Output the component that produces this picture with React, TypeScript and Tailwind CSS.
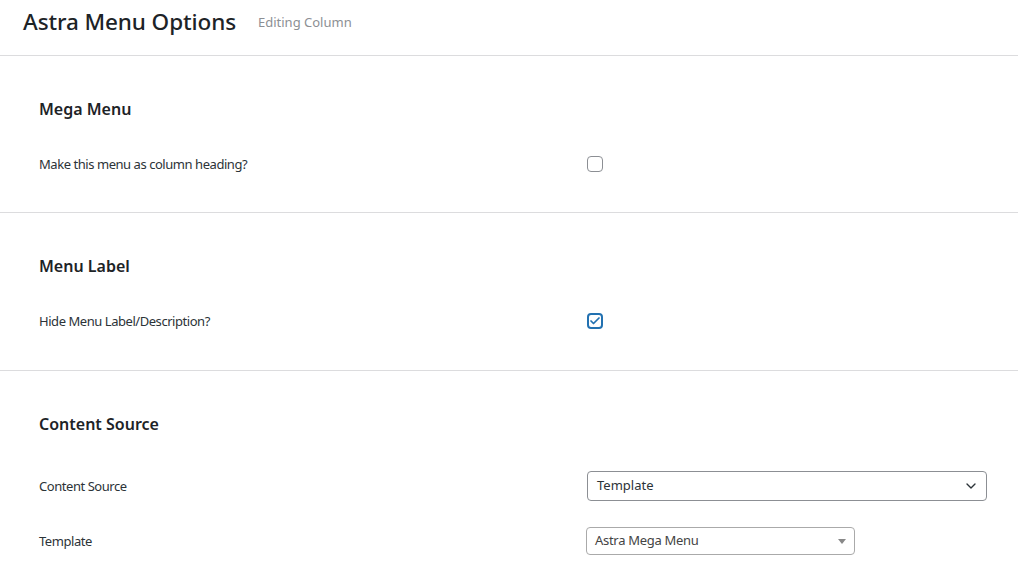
import { Check, ChevronDown } from 'lucide-react'

function Checkbox({ checked }: { checked?: boolean }) {
  return checked ? (
    <span className="h-4 w-4 rounded-[4px] border-2 border-[#2271b1] flex items-center justify-center">
      <Check size={12} strokeWidth={3.5} className="text-[#2271b1]" />
    </span>
  ) : (
    <span className="h-4 w-4 rounded-[4px] border border-[#8c8f94] bg-white" />
  )
}

function Row({ label, children, className = '' }: { label: string; children: React.ReactNode; className?: string }) {
  return (
    <div className={`grid grid-cols-[548px_1fr] items-center ${className}`}>
      <span className="text-[13px] tracking-[-0.45px] text-[#2c3338] pt-[2px]">{label}</span>
      <div className="flex items-center">{children}</div>
    </div>
  )
}

function Section({ title, children, bottom }: { title: string; children: React.ReactNode; bottom: string }) {
  return (
    <section className={`px-[39px] pt-[41px] ${bottom}`}>
      <h2 className="h-6 flex items-center text-[16px] font-semibold text-[#1d2327]">{title}</h2>
      {children}
    </section>
  )
}

export default function App() {
  return (
    <div className="w-[1018px] h-[586px] overflow-hidden bg-white" style={{ fontFamily: '"Noto Sans", "Open Sans", sans-serif' }}>
      <header className="h-14 flex items-center px-[23px] pb-[12px] border-b border-[#dcdcde]">
        <h1 className="text-[22.5px] font-medium text-[#1d2327] tracking-[-0.1px]">Astra Menu Options</h1>
        <span className="ml-[22px] text-[13px] text-[#8c8f94] mt-[3px]">Editing Column</span>
      </header>

      <Section title="Mega Menu" bottom="pb-8 border-b border-[#dcdcde]">
        <Row label="Make this menu as column heading?" className="h-8 mt-[27px]">
          <Checkbox />
        </Row>
      </Section>

      <Section title="Menu Label" bottom="pb-[33px] border-b border-[#dcdcde]">
        <Row label="Hide Menu Label/Description?" className="h-8 mt-[27px]">
          <Checkbox checked />
        </Row>
      </Section>

      <Section title="Content Source" bottom="pb-8">
        <Row label="Content Source" className="h-[30px] mt-[35px]">
          <div className="w-[400px] h-[30px] rounded-[4px] border border-[#8c8f94] flex items-center justify-between pl-[9px] pr-[7px] text-[13px] text-[#2c3338]">
            <span>Template</span>
            <ChevronDown size={16} strokeWidth={2} className="text-[#2c3338]" />
          </div>
        </Row>
        <Row label="Template" className="h-[28px] mt-[26px]">
          <div className="-ml-px w-[269px] h-[28px] rounded-[4px] border border-[#aaaaaa] flex items-center justify-between pl-[8px] pr-[8px] text-[13px] tracking-[-0.3px] text-[#444]">
            <span>Astra Mega Menu</span>
            <span className="w-0 h-0 border-l-[4px] border-r-[4px] border-t-[5px] border-l-transparent border-r-transparent border-t-[#888]" />
          </div>
        </Row>
      </Section>
    </div>
  )
}
